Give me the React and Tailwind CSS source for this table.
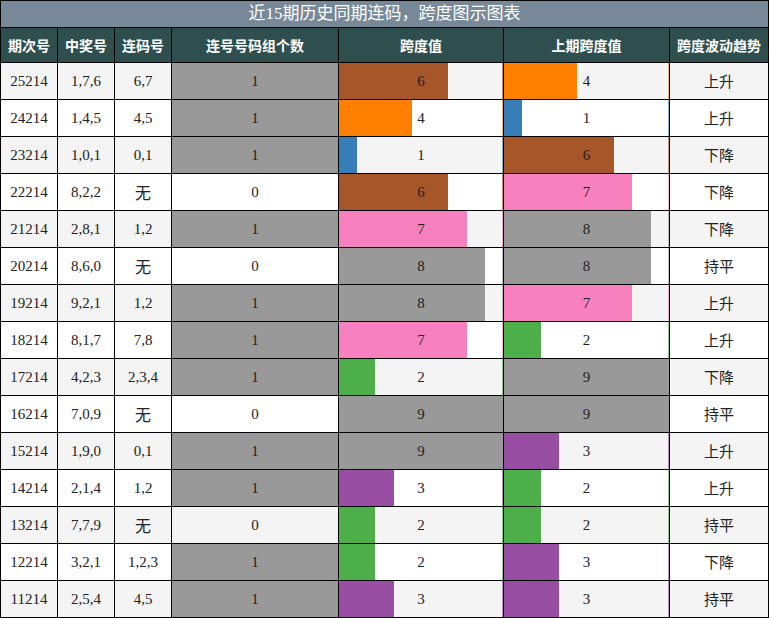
const rows = [
  ["25214", "1,7,6", "6,7", 1, 6, 4, "上升"],
  ["24214", "1,4,5", "4,5", 1, 4, 1, "上升"],
  ["23214", "1,0,1", "0,1", 1, 1, 6, "下降"],
  ["22214", "8,2,2", "无", 0, 6, 7, "下降"],
  ["21214", "2,8,1", "1,2", 1, 7, 8, "下降"],
  ["20214", "8,6,0", "无", 0, 8, 8, "持平"],
  ["19214", "9,2,1", "1,2", 1, 8, 7, "上升"],
  ["18214", "8,1,7", "7,8", 1, 7, 2, "上升"],
  ["17214", "4,2,3", "2,3,4", 1, 2, 9, "下降"],
  ["16214", "7,0,9", "无", 0, 9, 9, "持平"],
  ["15214", "1,9,0", "0,1", 1, 9, 3, "上升"],
  ["14214", "2,1,4", "1,2", 1, 3, 2, "上升"],
  ["13214", "7,7,9", "无", 0, 2, 2, "持平"],
  ["12214", "3,2,1", "1,2,3", 1, 2, 3, "下降"],
  ["11214", "2,5,4", "4,5", 1, 3, 3, "持平"],
];

const barColors = {
  0: "#e41a1c",
  1: "#377eb8",
  2: "#4daf4a",
  3: "#984ea3",
  4: "#ff7f00",
  5: "#ffff33",
  6: "#a65628",
  7: "#f781bf",
  8: "#999999",
  9: "#999999",
};

const serif = "font-['Liberation_Serif','Noto_Sans_CJK_SC',serif]";
const sans = "font-['Noto_Sans_CJK_SC','Noto_Sans',sans-serif]";

const BarCell = ({ value, max, bg }) => {
  const color = max === 1 ? "#999999" : barColors[value];
  return (
    <div className={`relative flex items-center justify-center ${bg}`}>
      <div
        className="absolute inset-y-0 left-0"
        style={{ width: `${(value / max) * 100}%`, background: color }}
      />
      {max !== 1 && (
        <div
          className="absolute inset-y-0 right-0 w-px opacity-60"
          style={{ background: color }}
        />
      )}
      <span className={`relative text-[15px] text-[#222] ${serif}`}>{value}</span>
    </div>
  );
};

const headers = ["期次号", "中奖号", "连码号", "连号号码组个数", "跨度值", "上期跨度值", "跨度波动趋势"];

export default function App() {
  return (
    <div className="w-[769px] h-[618px] bg-white">
      <div className="grid grid-cols-[56px_56px_56px_166px_164px_165px_98px] grid-rows-[26px_34px_repeat(15,36px)] gap-px bg-black border border-black">
        <div className={`col-span-7 bg-[#778899] flex items-center justify-center text-white text-[17px] ${serif}`}>
          近15期历史同期连码，跨度图示图表
        </div>
        {headers.map((h) => (
          <div
            key={h}
            className={`bg-[#2f4f4f] flex items-center justify-center text-white text-[14px] font-bold ${sans}`}
          >
            {h}
          </div>
        ))}
        {rows.map((r, i) => {
          const bg = i % 2 === 0 ? "bg-[#f4f4f4]" : "bg-white";
          return [
            <div key={`a${i}`} className={`${bg} flex items-center justify-center text-[15px] text-[#222] ${serif}`}>
              {r[0]}
            </div>,
            <div key={`b${i}`} className={`${bg} flex items-center justify-center text-[15px] text-[#222] ${serif}`}>
              {r[1]}
            </div>,
            <div
              key={`c${i}`}
              className={`${bg} flex items-center justify-center text-[#222] ${r[2] === "无" ? `text-[16px] ${sans}` : `text-[15px] ${serif}`}`}
            >
              {r[2]}
            </div>,
            <BarCell key={`d${i}`} value={r[3]} max={1} bg={bg} />,
            <BarCell key={`e${i}`} value={r[4]} max={9} bg={bg} />,
            <BarCell key={`f${i}`} value={r[5]} max={9} bg={bg} />,
            <div key={`g${i}`} className={`${bg} flex items-center justify-center text-[15px] text-[#222] ${sans}`}>
              {r[6]}
            </div>,
          ];
        })}
      </div>
    </div>
  );
}
